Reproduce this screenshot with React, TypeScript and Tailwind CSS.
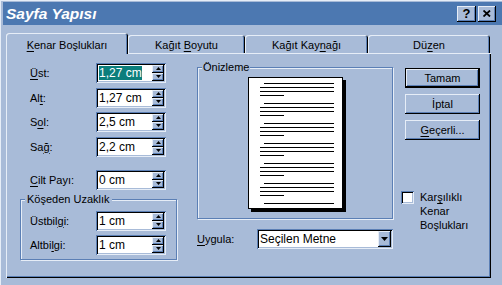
import type { ReactNode } from 'react';

const raised =
  'shadow-[inset_-1px_-1px_0_#000,inset_1px_1px_0_#e6edf7,inset_-2px_-2px_0_#5b7fb5]';
const sunken =
  'shadow-[inset_1px_1px_0_#5b7fb5,inset_-1px_-1px_0_#e6edf7,inset_2px_2px_0_#000,inset_-2px_-2px_0_#a8bbd8]';

function U({ children }: { children: ReactNode }) {
  return <span className="underline underline-offset-[2px]">{children}</span>;
}

function SpinHalf({ up }: { up?: boolean }) {
  return (
    <div className={`flex h-[8px] w-[12px] items-center justify-center bg-[#a8bbd8] ${raised}`}>
      <svg width="5" height="3" viewBox="0 0 5 3" className="mt-[-1px]">
        {up ? <path d="M2.5 0 L5 3 L0 3 Z" fill="#000" /> : <path d="M0 0 L5 0 L2.5 3 Z" fill="#000" />}
      </svg>
    </div>
  );
}

function Field({ value, selected }: { value: string; selected?: boolean }) {
  return (
    <div className={`flex h-[20px] w-[70px] bg-white p-[2px] ${sunken}`}>
      <div className="flex flex-1 items-center pl-[1px] text-[12px] leading-none">
        {selected ? <span className="bg-[#0b7e7c] py-[1px] text-white">{value}</span> : value}
      </div>
      <div className="flex flex-col">
        <SpinHalf up />
        <SpinHalf />
      </div>
    </div>
  );
}

function Row({ label, value, selected, labelW }: { label: ReactNode; value: string; selected?: boolean; labelW: string }) {
  return (
    <div className="flex h-[20px] items-center">
      <div className={labelW}>{label}</div>
      <Field value={value} selected={selected} />
    </div>
  );
}

function Tab({ children, w, active }: { children: ReactNode; w: string; active?: boolean }) {
  if (active) {
    return (
      <div className={`${w} flex h-[21px] justify-center rounded-t-[3px] bg-[#a8bbd8] pt-[6px] shadow-[inset_1px_1px_0_#e6edf7,inset_-1px_0_0_#000,inset_-2px_0_0_#5b7fb5]`}>
        {children}
      </div>
    );
  }
  return (
    <div className={`${w} flex h-[21px] flex-col justify-end border-b border-[#e6edf7]`}>
      <div className="flex h-[18px] justify-center rounded-t-[3px] pt-[4px] shadow-[inset_1px_1px_0_#e6edf7,inset_-1px_0_0_#000,inset_-2px_0_0_#5b7fb5]">
        {children}
      </div>
    </div>
  );
}

function Btn({ children, def }: { children: ReactNode; def?: boolean }) {
  if (def) {
    return (
      <div className="h-[20px] w-[75px] border border-black">
        <div className={`flex h-full items-center justify-center ${raised}`}>{children}</div>
      </div>
    );
  }
  return <div className={`flex h-[20px] w-[75px] items-center justify-center ${raised}`}>{children}</div>;
}

function Para({ last }: { last?: boolean }) {
  return (
    <div className="flex flex-col gap-[3px]">
      <div className="ml-[15px] h-[1px] w-[70px] bg-black" />
      {!last && (
        <>
          <div className="ml-[11px] h-[1px] w-[74px] bg-black" />
          <div className="ml-[11px] h-[1px] w-[74px] bg-black" />
          <div className="ml-[11px] h-[1px] w-[24px] bg-black" />
        </>
      )}
    </div>
  );
}

export default function App() {
  return (
    <div className="h-[285px] w-[502px] overflow-hidden bg-[#a8bbd8] pl-[3px] pt-[2px] font-['Liberation_Sans',Arial,sans-serif] text-[11px] leading-[13px] text-black shadow-[inset_1px_1px_0_#e6edf7]">
      <div className="flex h-[23px] items-center justify-between bg-[#4c78b1] pl-[3px] pr-[6px]">
        <span className="text-[15.5px] font-bold italic text-white">Sayfa Yapısı</span>
        <div className="flex gap-[2px]">
          <div className={`flex h-[16px] w-[19px] items-center justify-center bg-[#a8bbd8] text-[13px] font-bold ${raised}`}>?</div>
          <div className={`flex h-[16px] w-[18px] items-center justify-center bg-[#a8bbd8] ${raised}`}>
            <svg width="8" height="7" viewBox="0 0 8 7">
              <path d="M0.5 0.5 L7 6.5 M7 0.5 L0.5 6.5" stroke="#000" strokeWidth="1.8" />
            </svg>
          </div>
        </div>
      </div>

      <div className="ml-[3px] mt-[8px]">
        <div className="flex">
          <Tab w="w-[122px]" active>
            <span><U>K</U>enar Boşlukları</span>
          </Tab>
          <Tab w="w-[117px]">
            <span>Kağıt <U>B</U>oyutu</span>
          </Tab>
          <Tab w="w-[123px]">
            <span>Kağıt Kay<U>n</U>ağı</span>
          </Tab>
          <Tab w="w-[122px]">
            <span>Dü<U>z</U>en</span>
          </Tab>
          <div className="w-[1px] border-b border-[#e6edf7]" />
        </div>

        <div className="flex h-[224px] w-[485px] shadow-[inset_1px_0_0_#e6edf7,inset_-1px_-1px_0_#000,inset_-2px_-2px_0_#5b7fb5]">
          {/* left column */}
          <div className="flex w-[191px] flex-col pl-[14px] pt-[9px]">
            <div className="flex flex-col pl-[10px]">
              <Row labelW="w-[66px]" label={<><U>Ü</U>st:</>} value="1,27 cm" selected />
              <div className="mt-[5px]">
                <Row labelW="w-[66px]" label={<>Al<U>t</U>:</>} value="1,27 cm" />
              </div>
              <div className="mt-[4px]">
                <Row labelW="w-[66px]" label={<>S<U>o</U>l:</>} value="2,5 cm" />
              </div>
              <div className="mt-[5px]">
                <Row labelW="w-[66px]" label={<>Sa<U>ğ</U>:</>} value="2,2 cm" />
              </div>
              <div className="mt-[13px]">
                <Row labelW="w-[66px]" label={<><U>C</U>ilt Payı:</>} value="0 cm" />
              </div>
            </div>
            <div className="relative mt-[9px] h-[61px] w-[157px] border border-[#5b7fb5] pl-[9px] pt-[11px] shadow-[inset_1px_1px_0_#e6edf7,1px_1px_0_#e6edf7]">
              <span className="absolute left-[4px] top-[-7px] bg-[#a8bbd8] px-[2px]">Köşeden Uzaklık</span>
              <Row labelW="w-[66px]" label={<>Üstbil<U>g</U>i:</>} value="1 cm" />
              <div className="mt-[4px]">
                <Row labelW="w-[66px]" label={<>Altbi<U>l</U>gi:</>} value="1 cm" />
              </div>
            </div>
          </div>

          {/* preview column */}
          <div className="flex w-[196px] flex-col pt-[13px]">
            <div className="relative flex h-[152px] w-[196px] justify-center border border-[#5b7fb5] pt-[9px] shadow-[inset_1px_1px_0_#e6edf7,1px_1px_0_#e6edf7]">
              <span className="absolute left-[4px] top-[-7px] bg-[#a8bbd8] px-[1px]">Önizleme</span>
              <div className="ml-[1px] flex h-[132px] w-[95px] flex-col gap-[7px] border border-black bg-white pt-[5px] shadow-[3px_3px_0_#000]">
                <Para />
                <Para />
                <Para />
                <Para />
                <Para />
                <Para />
                <Para last />
              </div>
            </div>
            <div className="mt-[10px] flex h-[20px] items-center">
              <span className="w-[60px]"><U>U</U>ygula:</span>
              <div className={`flex h-[20px] w-[136px] bg-white p-[2px] ${sunken}`}>
                <div className="flex flex-1 items-center pl-[1px] text-[12px] leading-none">Seçilen Metne</div>
                <div className={`flex h-[16px] w-[13px] items-center justify-center bg-[#a8bbd8] ${raised}`}>
                  <svg width="7" height="4" viewBox="0 0 7 4">
                    <path d="M0 0 L7 0 L3.5 4 Z" fill="#000" />
                  </svg>
                </div>
              </div>
            </div>
          </div>

          {/* right column */}
          <div className="flex flex-col pl-[12px] pt-[14px]">
            <div className="flex flex-col gap-[6px]">
              <Btn def>Tamam</Btn>
              <Btn>İptal</Btn>
              <Btn><span><U>G</U>eçerli...</span></Btn>
            </div>
            <div className="ml-[-4px] mt-[51px] flex">
              <div className={`h-[13px] w-[13px] bg-white ${sunken}`} />
              <div className="ml-[6px] mt-[-1px] leading-[14px]">
                Kar<U>ş</U>ılıklı
                <br />
                Kenar
                <br />
                Boşlukları
              </div>
            </div>
          </div>
        </div>
      </div>
    </div>
  );
}
